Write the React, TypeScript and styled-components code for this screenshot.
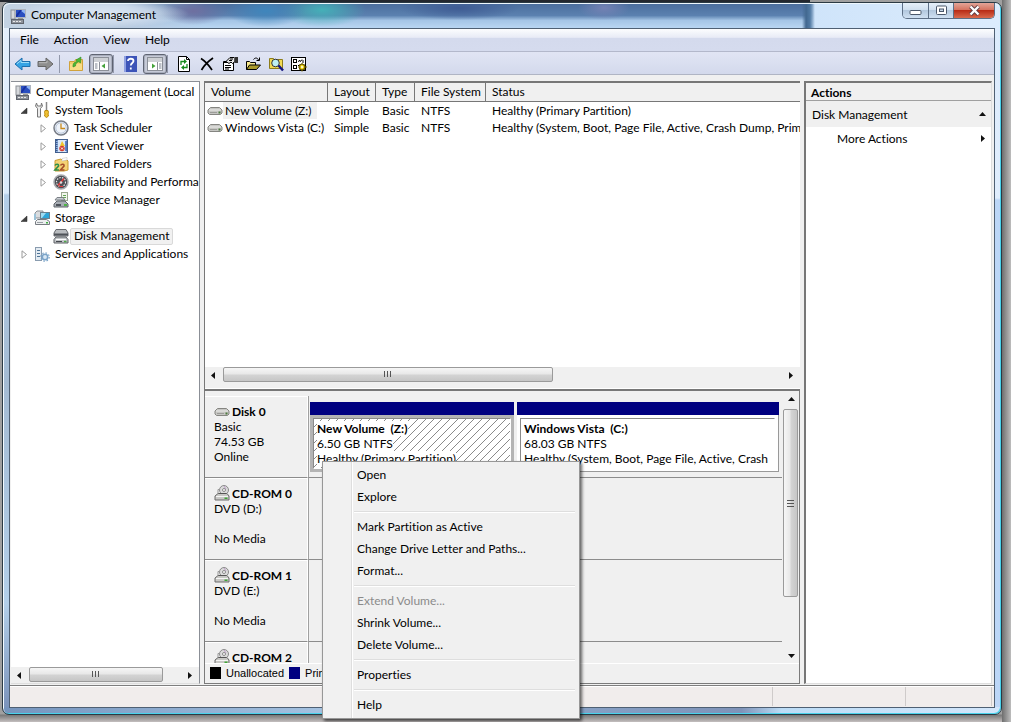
import React from "react";
import styled, { createGlobalStyle, css } from "styled-components";

const GlobalStyle = createGlobalStyle`
  *, *::before, *::after { box-sizing: border-box; }
  body {
    margin: 0;
    background: #a3a3a3;
    font: 12px/15px Lato, "Open Sans", sans-serif;
    font-variant-ligatures: none;
    color: #000;
  }
  button { font: inherit; font-variant-ligatures: none; color: inherit; margin: 0; padding: 0; border: 0; background: none; }
  ul, h1, h2, p { margin: 0; padding: 0; font-size: inherit; list-style: none; }
`;

const Desktop = styled.div`
  display: flex;
  min-height: 100vh;
  padding: 2px 9px 7px 2px;
  background:
    linear-gradient(#23272e, #23272e) 0 0 / 810px 2px no-repeat,
    linear-gradient(to right, transparent calc(100% - 9px), #6e6e6e calc(100% - 9px), #bdbdbd),
    linear-gradient(to top, #c4bfbf, #777 7px, #a0a0a0 8px);
`;

const Window = styled.div`
  position: relative;
  flex: 1;
  min-width: 0;
  display: flex;
  flex-direction: column;
  padding: 0 6px 6px;
  border: 1px solid #2b3a44;
  border-radius: 7px;
  box-shadow: inset 1px 1px 0 #f4fbff, inset -1px -1px 0 #48d3ec;
  background:
    linear-gradient(to right, #7594bd, #a9c6e4 35%, #8aa6ca 50%, #7f93b8 74%, #bcdcf6 78%, #d3e6fb) 0 100% / 100% 7px no-repeat,
    linear-gradient(#e5f0fb 0, #d9eafa 190px, #b4cfe9 192px, #a4bbd3 380px, #b3cfe9 600px, #7890b8) 0 0 / 8px 100% no-repeat,
    linear-gradient(#dcebfc 0, #e0edfd 195px, #bcd6f7 197px, #bcd6f7);
`;

const TitleBar = styled.header`
  display: flex;
  align-items: center;
  height: 25px;
  margin: 0 -5px;
  padding-left: 6px;
  border-radius: 6px 6px 0 0;
  box-shadow: inset 0 1px 0 #eef7fd;
  background:
    radial-gradient(ellipse 90px 14px at 95px 11px, #dfe9f4f0, #d5e1f0b0 60%, transparent),
    radial-gradient(ellipse 34px 14px at 190px 8px, #6e6fa0, transparent),
    radial-gradient(ellipse 40px 16px at 262px 8px, #3f86bc, transparent),
    radial-gradient(ellipse 44px 17px at 318px 7px, #45b0b8, transparent),
    radial-gradient(ellipse 60px 12px at 455px 5px, #3f5c94, transparent),
    radial-gradient(ellipse 26px 12px at 600px 5px, #7482b4, transparent),
    linear-gradient(to right, transparent 798px, #41678f 802px, #527ba4 806px, transparent 811px),
    linear-gradient(to right, #c3d3e3 0, #b9cbe0 120px, transparent 200px, transparent 800px, #cfe4fa 810px, #dcecfd),
    linear-gradient(#4a6c9c, #5b81b0 50%, #a5c5e6 70%, #b9d6f2);
`;

const Title = styled.h1`
  flex: 1;
  margin-left: 5px;
  padding-bottom: 2px;
  font-weight: 400;
`;

const CaptionButtons = styled.div`
  display: flex;
  align-self: flex-start;
  height: 16px;
  margin-right: 5px;
  border: solid #5d6f86;
  border-width: 0 1px 1px;
  border-radius: 0 0 5px 5px;
  overflow: hidden;
`;

const CaptionButton = styled.button<{ $close?: boolean }>`
  display: grid;
  place-items: center;
  width: ${(p) => (p.$close ? 41 : 25)}px;
  background: ${(p) =>
    p.$close
      ? "linear-gradient(#e3a598, #d4705c 48%, #b92d17 50%, #d9694c)"
      : "linear-gradient(#e6f0fa, #cfdfef 48%, #b3c8de 50%, #cfe0f2)"};
  & + & { border-left: 1px solid #5d6f86; }
`;

const Client = styled.div`
  flex: 1;
  display: flex;
  flex-direction: column;
  border: 1px solid #4f6073;
  background: #f0f0f0;
`;

const MenuBar = styled.nav`
  display: flex;
  align-items: center;
  height: 23px;
  padding-left: 4px;
  background: linear-gradient(#fcfdfe, #e8ebf6 38%, #d4daed 42%, #d5dbee);
  border-bottom: 1px solid #b3b8cb;
`;

const MenuButton = styled.button`
  height: 20px;
  padding: 0 6px 2px;
  & + & { margin-left: 3px; }
`;

const ToolBar = styled.div`
  display: flex;
  align-items: flex-end;
  height: 23px;
  padding-left: 1px;
  background: linear-gradient(#e1e5f4, #d3d9ec);
  border-bottom: 1px solid #b0b5c4;
`;

const ToolButton = styled.button<{ $pressed?: boolean }>`
  display: grid;
  place-items: center;
  width: 23px;
  height: 20px;
  ${(p) =>
    p.$pressed &&
    css`
      width: 24px;
      margin: 0 -2px 0 2px;
      border: 1px solid #5f6472;
      border-radius: 3px;
      background: #c6cad7;
      box-shadow: inset 0 0 0 1px #a9aebd;
    `}
`;

const ToolDivider = styled.span`
  width: 1px;
  height: 18px;
  margin: 0 4px 1px 2px;
  background: #9298ab;
`;

const Main = styled.main`
  flex: 1;
  display: grid;
  grid-template-columns: 189px minmax(0, 1fr) 188px;
  gap: 4px;
  padding: 6px 2px 1px 1px;
`;

const TreePane = styled.aside`
  display: flex;
  flex-direction: column;
  min-width: 0;
  border-top: 1px solid #8b8f96;
  border-right: 1px solid #8b8f96;
  border-bottom: 1px solid #dedede;
  background: #fff;
  overflow: hidden;
`;

const Tree = styled.ul`
  flex: 1;
  padding: 1px 0 0 4px;
`;

const TreeRow = styled.li<{ $level: number }>`
  display: flex;
  align-items: center;
  height: 18px;
  padding-left: ${(p) => (p.$level ? p.$level * 19 - 16 : 0)}px;
  white-space: nowrap;
  svg { flex: none; }
`;

const Expander = styled.span`
  display: grid;
  place-items: center;
  flex: none;
  width: 12px;
  margin-right: 4px;
`;

const TreeLabel = styled.span<{ $selected?: boolean }>`
  margin-left: 1px;
  padding: 0 3px 2px;
  line-height: 13px;
  border: 1px solid ${(p) => (p.$selected ? "#d9d9d9" : "transparent")};
  border-radius: 2px;
  background: ${(p) => (p.$selected ? "#f1f1f1" : "none")};
`;

const Scroll = styled.div<{ $vertical?: boolean }>`
  display: flex;
  flex: none;
  background: #f0f0f0;
  ${(p) =>
    p.$vertical
      ? css`
          flex-direction: column;
          width: 16px;
        `
      : css`
          height: 16px;
          padding-right: 2px;
        `}
`;

const ScrollArrow = styled.button`
  display: grid;
  place-items: center;
  flex: none;
  width: 16px;
  height: 16px;
`;

const Track = styled.div<{ $vertical?: boolean }>`
  display: flex;
  flex: 1;
  flex-direction: ${(p) => (p.$vertical ? "column" : "row")};
  padding: ${(p) => (p.$vertical ? "2px 1px 0 0" : "0 0 1px 2px")};
`;

const Thumb = styled.div<{ $vertical?: boolean; $size: number }>`
  display: grid;
  place-items: center;
  flex: 0 0 ${(p) => p.$size}%;
  border: 1px solid #9a9a9a;
  border-radius: 2px;
  background: linear-gradient(
    ${(p) => (p.$vertical ? "to right" : "to bottom")},
    #f6f6f6,
    #e7e7e7 48%,
    #d4d4d4 52%,
    #c6c6c6
  );
`;

const Center = styled.section`
  display: flex;
  flex-direction: column;
  min-width: 0;
`;

const VolumePane = styled.div`
  flex: 1;
  display: flex;
  flex-direction: column;
  border-top: 2px solid #777;
  border-left: 1px solid #777;
  border-bottom: 2px solid #777;
  background: #fff;
  overflow: hidden;
`;

const VolumeArea = styled.div`
  flex: 1;
  overflow: hidden;
`;

const VolumeTable = styled.table`
  width: 100%;
  table-layout: fixed;
  border-collapse: separate;
  border-spacing: 0;
  white-space: nowrap;
  th, td { padding: 0 0 0 6px; text-align: left; font-weight: 400; overflow: hidden; }
  th {
    height: 19px;
    padding-bottom: 1px;
    background: #f0f0f0;
    border-right: 1px solid #777;
    border-bottom: 1px solid #777;
  }
  th:last-child { border-right: 0; }
  td { height: 17px; line-height: 17px; }
  td:first-child { padding-left: 2px; }
`;

const Col = styled.col<{ $w?: number }>`
  width: ${(p) => (p.$w ? `${p.$w}px` : "auto")};
`;

const VolumeName = styled.span<{ $selected?: boolean }>`
  display: flex;
  align-items: center;
  gap: 2px;
  width: max-content;
  padding-right: 5px;
  background: ${(p) => (p.$selected ? "linear-gradient(to right, #fff 16px, #f0f0f0 16px)" : "none")};
`;

const Splitter = styled.div`
  height: 6px;
  background: #f0f0f0;
  border-bottom: 1px solid #fff;
`;

const DiskPane = styled.div`
  position: relative;
  flex: none;
  display: flex;
  flex-direction: column;
  height: 293px;
  border: solid #7b7b7b;
  border-width: 0 1px 1px;
`;

const DiskArea = styled.div`
  flex: 1;
  display: flex;
  min-height: 0;
`;

const DiskList = styled.div`
  flex: 1;
  min-width: 0;
  padding-top: 5px;
  overflow: hidden;
`;

const DiskRow = styled.section`
  display: grid;
  grid-template-columns: 103px minmax(0, 1fr);
  height: 82px;
  padding-right: 1px;
`;

const DiskLabel = styled.div`
  padding: 7px 0 0 9px;
  border-top: 1px solid #fff;
  border-right: 1px solid #fff;
  border-bottom: 1px solid #8c8c8c;
`;

const DiskName = styled.h2`
  display: flex;
  align-items: center;
  height: 15px;
  gap: 2px;
  font-weight: 700;
`;

const DiskLine = styled.p`
  min-height: 15px;
`;

const DiskGraph = styled.div`
  display: flex;
  gap: 3px;
  padding: 6px 3px 5px 1px;
  border-left: 1px solid #a0a0a0;
  border-bottom: 1px solid #8c8c8c;
`;

const Partition = styled.div<{ $size: number }>`
  flex: ${(p) => p.$size} 1 0;
  min-width: 0;
  display: flex;
  flex-direction: column;
  border-top: 13px solid #000080;
`;

const PartitionFrame = styled.div<{ $selected?: boolean }>`
  flex: 1;
  display: flex;
  padding: 3px;
  background: ${(p) => (p.$selected ? "#b4b4b4" : "#fff")};
  border-right: ${(p) => (p.$selected ? 0 : 1)}px solid #999;
  border-bottom: ${(p) => (p.$selected ? 0 : 1)}px solid #999;
`;

const PartitionBody = styled.div<{ $selected?: boolean }>`
  flex: 1;
  min-width: 0;
  padding: 2px 3px 0;
  border: 1px solid #8a8a8a;
  border-right-color: #fff;
  border-bottom-color: #fff;
  background: ${(p) =>
    p.$selected
      ? "#fff linear-gradient(135deg, transparent 45%, #8a8a8a 45% 55%, transparent 55%) 0 0 / 8px 8px"
      : "#fff"};
  overflow: hidden;
`;

const PartitionLine = styled.p<{ $bold?: boolean }>`
  width: max-content;
  background: #fff;
  font-weight: ${(p) => (p.$bold ? 700 : 400)};
  white-space: pre;
`;

const Legend = styled.div`
  display: flex;
  align-items: center;
  height: 20px;
  padding: 0 0 2px 5px;
  border-top: 1px solid #fff;
  background: #f0f0f0;
  font: 11px/14px "Liberation Sans", Arial, sans-serif;
`;

const LegendItem = styled.span<{ $color: string }>`
  display: flex;
  align-items: center;
  gap: 5px;
  margin-right: 5px;
  &::before {
    content: "";
    width: 11px;
    height: 12px;
    background: ${(p) => p.$color};
  }
`;

const ContextMenu = styled.div`
  position: absolute;
  left: 117px;
  top: 70px;
  width: 258px;
  padding: 2px;
  border: 1px solid #979797;
  background: linear-gradient(to right, #f1f1f1 28px, #dedede 28px, #dedede 29px, #fff 29px, #fff 30px, #f0f0f0 30px);
  box-shadow: 2px 2px 3px #0009;
`;

const ContextItem = styled.button`
  display: block;
  width: 100%;
  height: 22px;
  padding: 0 0 1px 32px;
  text-align: left;
  &:disabled { color: #8b8b8b; }
`;

const ContextDivider = styled.hr`
  height: 2px;
  margin: 3px 2px 3px 29px;
  border: 0;
  border-top: 1px solid #dedede;
  border-bottom: 1px solid #fff;
`;

const ActionsPane = styled.aside`
  border-top: 2px solid #777;
  border-left: 2px solid #777;
  border-bottom: 1px solid #dedede;
  border-right: 1px solid #dedede;
  background: #fff;
`;

const ActionsHead = styled.h2`
  height: 18px;
  padding: 2px 5px 0;
  background: #f0f0f0;
  border-bottom: 1px solid #a0a0a0;
  font-weight: 700;
`;

const ActionItem = styled.button<{ $group?: boolean }>`
  display: flex;
  align-items: center;
  justify-content: space-between;
  width: 100%;
  height: ${(p) => (p.$group ? 26 : 22)}px;
  padding: 0 4px 0 ${(p) => (p.$group ? 6 : 31)}px;
  background: ${(p) => (p.$group ? "#f0f0f0" : "#fff")};
`;

const StatusBar = styled.footer`
  display: grid;
  grid-template-columns: 1fr 133px 86px;
  height: 22px;
  padding: 1px 2px 1px 0;
  border-top: 1px solid #7e7e7e;
  background: #f1edec;
  box-shadow: inset 0 1px 0 #fff;
`;

const StatusCell = styled.span`
  border-right: 1px solid #cfcbca;
`;

type Dir = "left" | "right" | "up" | "down";
const arrowPaths: Record<Dir, string> = {
  left: "M6 1v7L2 4.5z",
  right: "M3 1v7l4-3.500z",
  up: "M1 6h7L4.500 2z",
  down: "M1 3h7L4.500 7z",
};
const Arrow = ({ dir }: { dir: Dir }) => (
  <svg width="9" height="9" viewBox="0 0 9 9" aria-hidden="true">
    <path d={arrowPaths[dir]} fill="#111" />
  </svg>
);

const Grip = ({ vertical }: { vertical?: boolean }) => (
  <svg width="9" height="9" viewBox="0 0 9 9" aria-hidden="true">
    <path
      d={vertical ? "M1 1.500h7M1 4.500h7M1 7.500h7" : "M1.500 1v6M4.500 1v6M7.500 1v6"}
      stroke="#555"
      fill="none"
    />
  </svg>
);

function ScrollBar({ vertical, size, label }: { vertical?: boolean; size: number; label: string }) {
  return (
    <Scroll $vertical={vertical} role="scrollbar" aria-label={label}>
      <ScrollArrow aria-label="Scroll back">
        <Arrow dir={vertical ? "up" : "left"} />
      </ScrollArrow>
      <Track $vertical={vertical}>
        <Thumb $vertical={vertical} $size={size}>
          <Grip vertical={vertical} />
        </Thumb>
      </Track>
      <ScrollArrow aria-label="Scroll forward">
        <Arrow dir={vertical ? "down" : "right"} />
      </ScrollArrow>
    </Scroll>
  );
}

const Icon = ({ children, w = 16, h = 16 }: { children: React.ReactNode; w?: number; h?: number }) => (
  <svg width={w} height={h} viewBox={`0 0 ${w} ${h}`} fill="none" aria-hidden="true">
    {children}
  </svg>
);

const ComputerIcon = () => (
  <Icon>
    <rect x="1" y="2" width="4" height="9" fill="#d5d8dc" stroke="#8c9096" />
    <rect x="5.500" y="1.500" width="10" height="8" fill="#2a4fc0" stroke="#aeb4bd" />
    <path d="M10 2h5v4z" fill="#8fb4f4" />
    <path d="M6 7l4-5h2L7 9H6z" fill="#1730a0" />
    <path d="M8 10h5v1.500H8z" fill="#999" />
    <rect x="1.500" y="11.500" width="12" height="4" fill="#8f949c" stroke="#5f646c" />
    <path d="M3 13.500h9" stroke="#e8e8e8" strokeDasharray="2 1" />
  </Icon>
);
const ToolsIcon = () => (
  <Icon>
    <path d="M2.500 1L1.500 4l2 2.500V15h3V6.500l2-2.500-1-3-.5 3H3.500z" fill="#ededed" stroke="#777" />
    <path d="M12.500 0v8" stroke="#888" strokeWidth="1.500" />
    <path d="M11 8.500h3l.5 2-.5 1.500.5 2-2 1.500-2-1.500.5-2-.5-1.500z" fill="#f1c232" stroke="#b98a10" />
  </Icon>
);
const ClockIcon = () => (
  <Icon>
    <circle cx="8" cy="8" r="7" fill="#eef3fa" stroke="#777c86" strokeWidth="1.500" />
    <circle cx="8" cy="8" r="5.200" stroke="#b9c6d9" />
    <path d="M8 3.500V8.500h4" stroke="#c98a1c" strokeWidth="1.300" />
  </Icon>
);
const EventIcon = () => (
  <Icon>
    <rect x="2.500" y="1.500" width="12" height="13" fill="#8fb0e0" stroke="#44618f" />
    <rect x="5" y="2" width="8" height="12" fill="#dbe8f8" />
    <path d="M3.500 2v13" stroke="#3d5a8b" strokeDasharray="1 1" strokeWidth="2" />
    <path d="M9 3l3 5H7z" fill="#f0c52d" />
    <circle cx="9" cy="10.500" r="2.700" fill="#d23b2d" />
    <path d="M8 9.500l2 2m0-2l-2 2" stroke="#fff" />
    <path d="M13 3v10" stroke="#3a64b8" strokeWidth="1.500" />
  </Icon>
);
const SharedIcon = () => (
  <Icon>
    <path d="M2 4.500L8 3l1 1h5l1 1V14l-4 1H2z" fill="#f4d273" stroke="#c99a2e" />
    <path d="M9 2.500l5-1v2.500L9 5z" fill="#fff" stroke="#bbb" strokeWidth=".5" />
    <path d="M2 9.500c1-2 4-1.500 3.500.5L2 14h4" stroke="#2f8f48" strokeWidth="1.600" />
    <path d="M7.500 9.500c1-2 4-1.500 3.500.5l-3.500 4h4" stroke="#a5502a" strokeWidth="1.600" />
  </Icon>
);
const GaugeIcon = () => (
  <Icon>
    <circle cx="8" cy="8" r="7" fill="#4c4f55" stroke="#a7a9ad" strokeWidth="1.500" />
    <circle cx="8" cy="8" r="4.500" stroke="#e8e8e8" strokeWidth="1.200" strokeDasharray="1.500 1.200" />
    <path d="M5 11.500L11 4.500" stroke="#e8393a" strokeWidth="1.400" />
    <circle cx="8" cy="8.500" r="1.300" fill="#ddd" />
    <path d="M6 12.500h4" stroke="#e8393a" />
  </Icon>
);
const DeviceIcon = () => (
  <Icon>
    <rect x="8.500" y=".5" width="6" height="8" fill="#f3f7ee" stroke="#9aa88f" />
    <path d="M10 3.500h3M10 5.500h3" stroke="#62a552" />
    <path d="M2 8l2-2.500h6L12 8z" fill="#c9cdd2" stroke="#7b8087" />
    <path d="M1 12l3-3h8l3 3v3H1z" fill="#a8adb4" stroke="#5f646b" />
    <rect x="3" y="12" width="5" height="2" fill="#4d525a" />
    <rect x="11" y="12" width="3" height="2" fill="#4db544" />
  </Icon>
);
const StorageIcon = () => (
  <Icon>
    <path d="M1 3l2-2h6v7H1z" fill="#d9dcdf" stroke="#8b9096" />
    <rect x="6.500" y="2.500" width="9" height="6" fill="#2da5d8" stroke="#69808e" />
    <path d="M7 3h5L8 8H7z" fill="#9fdcf2" />
    <path d="M1.500 11.500l2-2h9l3 2v3h-14z" fill="#eceeef" stroke="#777c82" />
    <path d="M3 12.500h6" stroke="#9a9fa5" />
    <rect x="12" y="12" width="2" height="1.500" fill="#3fae44" />
    <path d="M1 4v6" stroke="#9bc2d8" strokeWidth="2" />
  </Icon>
);
const DiskMgmtIcon = () => (
  <Icon>
    <path d="M1 5l2-3.500h10L15 5v3H1z" fill="#b9bcbf" stroke="#66696e" />
    <path d="M1 5.500h14v2H1z" fill="#4f5358" />
    <path d="M3 9h10l2 2.500V15H1v-3.500z" fill="#c3c6c9" stroke="#5c6065" />
    <path d="M3 11.500h10" stroke="#fff" />
    <path d="M3 13.500h6" stroke="#44484d" />
    <rect x="11" y="12.800" width="2.500" height="1.500" fill="#50a84b" />
  </Icon>
);
const ServicesIcon = () => (
  <Icon>
    <rect x="1.500" y="1.500" width="6" height="13" fill="#e3ebf2" stroke="#8a9caf" />
    <path d="M3 4.500h3M3 7.500h3M3 10.500h3" stroke="#4e7395" />
    <circle cx="11" cy="11" r="2.700" stroke="#7ba4c9" strokeWidth="1.600" fill="#d9e8f5" />
    <circle cx="11" cy="11" r="4.200" stroke="#7ba4c9" strokeDasharray="1.500 1.800" strokeWidth="1.200" />
  </Icon>
);
const DriveIcon = () => (
  <Icon h={10}>
    <path d="M1 4l2.500-2.500h9L15 4v3l-1.500 1.500h-11L1 7z" fill="#c6c6c3" stroke="#858581" />
    <path d="M2 4h12" stroke="#ececea" />
    <path d="M3 6.500h7" stroke="#9c9c98" />
    <rect x="11.500" y="5.500" width="2" height="2" fill="#4b7a3d" />
  </Icon>
);
const CdIcon = () => (
  <Icon h={18}>
    <circle cx="10" cy="5" r="4.500" fill="#dcdcdc" stroke="#8a8a8a" />
    <circle cx="10" cy="5" r="1.500" fill="#fff" stroke="#8a8a8a" />
    <path d="M10 1l2 3" stroke="#bfa0c9" />
    <path d="M4 8v-3.500h2" stroke="#999" />
    <path d="M1 11l3-2.500h9l2 2.500v4H1z" fill="#c8c8c5" stroke="#6c6c6c" />
    <path d="M2 11.500h12" stroke="#f5f5f5" />
    <path d="M5 8.500h7" stroke="#555" />
    <rect x="10.500" y="12.500" width="3" height="1.500" fill="#3fa637" />
  </Icon>
);

const BackIcon = () => (
  <Icon w={17}>
    <path d="M1 8l7-6v3.500h8v5H8V14z" fill="#36a3e4" stroke="#1d6fae" />
    <path d="M3 7.700L7 4.500v2h8" stroke="#9bdcf8" />
  </Icon>
);
const ForwardIcon = () => (
  <Icon w={17}>
    <path d="M16 8L9 2v3.500H1v5h8V14z" fill="#8e8e8e" stroke="#666" />
    <path d="M2 6.700h8v-2" stroke="#b9b9b9" />
  </Icon>
);
const UpFolderIcon = () => (
  <Icon>
    <path d="M1.500 5.500h5l1-2h7v11h-13z" fill="#f3cf6a" stroke="#d0a23c" />
    <path d="M2 8h12v6H2z" fill="#f9dc86" />
    <path d="M5 11c-.5-3 1-5 4-5.500L8 4l5-3-.5 6-1.700-1.200C8.500 6.500 7.500 8 7.500 10z" fill="#4cb935" stroke="#2f8c22" strokeWidth=".6" />
  </Icon>
);
const PaneIcon = ({ flip }: { flip?: boolean }) => (
  <Icon>
    <rect x=".5" y="1.500" width="15" height="13" fill="#fff" stroke="#8b8f98" />
    <path d="M1 3h14M1 5h14" stroke="#9da2ab" />
    <path d={flip ? "M10.500 6v8" : "M6.500 6v8"} stroke="#8b8f98" />
    <path d={flip ? "M12 8h2.500M12 10h2.500M12 12h2.500" : "M2 8h2.500M2 10h2.500M2 12h2.500"} stroke="#7b8290" />
    <path d={flip ? "M5 7.500v5L8.500 10z" : "M12 7.500v5L8.500 10z"} fill="#45a23a" />
  </Icon>
);
const HelpIcon = () => (
  <Icon>
    <rect x="2" y="0" width="13" height="16" fill="#3d54b8" />
    <path d="M2 0h2v16H2z" fill="#8fa0e0" />
    <path d="M6 5c0-3 5.500-3 5.500 0 0 2-2.700 2-2.700 4.500M8.800 11.500v2" stroke="#fff" strokeWidth="1.800" />
  </Icon>
);
const RefreshIcon = () => (
  <Icon>
    <path d="M2.500.5h8l3 3v12h-11z" fill="#fff" stroke="#000" />
    <path d="M10.500.5v3h3" stroke="#000" />
    <path d="M5 9V5.500h4" stroke="#168a1d" strokeWidth="1.300" />
    <path d="M8 3l3 2.500L8 8z" fill="#168a1d" />
    <path d="M11 8v3.500H7" stroke="#168a1d" strokeWidth="1.300" />
    <path d="M8 9l-3 2.500L8 14z" fill="#168a1d" />
  </Icon>
);
const DeleteIcon = () => (
  <Icon>
    <path d="M2 2.500c4 2.500 8 7 11 11.500M14 2C9 5.500 5 9.500 2.500 14" stroke="#000" strokeWidth="1.700" />
  </Icon>
);
const PropertiesIcon = () => (
  <Icon>
    <path d="M1.500 5.500h10v9h-10z" fill="#fff" stroke="#000" />
    <path d="M1 6.500h9M3 9.500h6M3 11.500h6M3 13h4" stroke="#000" />
    <path d="M4 5.500l4-4h4l1 1v3l-2.500 2L9 6l-2 1.500z" fill="#e6e6e6" stroke="#000" />
    <path d="M7 4.500h3M8 3h3" stroke="#000" />
    <path d="M12.500 1H16v6h-3.500z" fill="#333" />
  </Icon>
);
const OpenIcon = () => (
  <Icon>
    <path d="M1.500 13.500v-8h3l1 1h5v3" fill="#f6e78c" stroke="#000" />
    <path d="M1.500 13.500l3-4.500h11l-4 4.500z" fill="#a99a2c" stroke="#000" />
    <path d="M8.500 3.500c1.500-2 4-2 5 .5M14.500 1.500v3h-3" stroke="#000" />
  </Icon>
);
const SearchIcon = () => (
  <Icon>
    <path d="M1.500 12.500v-10h4l1 1h8v9z" fill="#f2da52" stroke="#8d7c1a" />
    <circle cx="7.500" cy="7" r="3.800" fill="#bdeff2" stroke="#333" />
    <path d="M10.500 9.500l4.500 5" stroke="#14147e" strokeWidth="2.500" />
  </Icon>
);
const SettingsIcon = () => (
  <Icon>
    <rect x=".5" y="1.500" width="14" height="13" fill="#fff" stroke="#000" />
    <rect x="2.500" y="3.500" width="3" height="3" stroke="#000" />
    <rect x="2.500" y="9.500" width="3" height="3" stroke="#000" />
    <path d="M7.500 6l1-2 1 1.500L11 3.500M12 4v3M7 9.500h3" stroke="#000" />
    <circle cx="11" cy="11" r="3" fill="#f4d91c" stroke="#6d5d00" />
    <path d="M11 7v2M11 13v2.500M7.500 11h2M13 11h3M8.500 8.500l1 1M12.500 12.500l1.500 1.500M13.500 8.500l-1 1M8.500 13.500l1-1" stroke="#6d5d00" />
    <circle cx="11" cy="11" r="1" fill="#fff" />
  </Icon>
);

type Node = { label: string; level: number; icon: React.ReactNode; state?: "open" | "closed"; selected?: boolean };
const treeNodes: Node[] = [
  { label: "Computer Management (Local", level: 0, icon: <ComputerIcon /> },
  { label: "System Tools", level: 1, icon: <ToolsIcon />, state: "open" },
  { label: "Task Scheduler", level: 2, icon: <ClockIcon />, state: "closed" },
  { label: "Event Viewer", level: 2, icon: <EventIcon />, state: "closed" },
  { label: "Shared Folders", level: 2, icon: <SharedIcon />, state: "closed" },
  { label: "Reliability and Performance", level: 2, icon: <GaugeIcon />, state: "closed" },
  { label: "Device Manager", level: 2, icon: <DeviceIcon /> },
  { label: "Storage", level: 1, icon: <StorageIcon />, state: "open" },
  { label: "Disk Management", level: 2, icon: <DiskMgmtIcon />, selected: true },
  { label: "Services and Applications", level: 1, icon: <ServicesIcon />, state: "closed" },
];

const volumes = [
  { name: "New Volume (Z:)", status: "Healthy (Primary Partition)", selected: true },
  { name: "Windows Vista (C:)", status: "Healthy (System, Boot, Page File, Active, Crash Dump, Primary Partition)" },
];

const discs = [
  { name: "CD-ROM 0", lines: ["DVD (D:)", "", "No Media"] },
  { name: "CD-ROM 1", lines: ["DVD (E:)", "", "No Media"] },
  { name: "CD-ROM 2", lines: [] },
];

const menuGroups = [
  ["Open", "Explore"],
  ["Mark Partition as Active", "Change Drive Letter and Paths...", "Format..."],
  ["Extend Volume...", "Shrink Volume...", "Delete Volume..."],
  ["Properties"],
  ["Help"],
];

const ExpandMark = ({ state }: { state?: "open" | "closed" }) => (
  <svg width="8" height="9" viewBox="0 0 8 9" aria-hidden="true">
    {state === "open" && <path d="M7 2v5.500H1z" fill="#404040" stroke="#222" strokeWidth=".5" />}
    {state === "closed" && <path d="M2 .8v7.400L6.500 4.500z" fill="#fff" stroke="#9a9a9a" />}
  </svg>
);

export default function App() {
  return (
    <>
      <GlobalStyle />
      <Desktop>
        <Window>
          <TitleBar>
            <ComputerIcon />
            <Title>Computer Management</Title>
            <CaptionButtons>
              <CaptionButton aria-label="Minimize">
                <Icon w={13} h={11}>
                  <rect x="1" y="5.500" width="11" height="4" rx="1" fill="#fff" stroke="#4b586b" />
                </Icon>
              </CaptionButton>
              <CaptionButton aria-label="Maximize">
                <Icon w={13} h={11}>
                  <rect x="1.500" y="1" width="10" height="8.500" rx="1" fill="#fff" stroke="#4b586b" />
                  <rect x="4.500" y="4" width="4" height="2.500" fill="#c3d3e4" stroke="#4b586b" />
                </Icon>
              </CaptionButton>
              <CaptionButton $close aria-label="Close">
                <Icon w={13} h={11}>
                  <path d="M2.500 1.500l8 8M10.500 1.500l-8 8" stroke="#5b3b44" strokeWidth="4" />
                  <path d="M2.500 1.500l8 8M10.500 1.500l-8 8" stroke="#fff" strokeWidth="2.400" />
                </Icon>
              </CaptionButton>
            </CaptionButtons>
          </TitleBar>
          <Client>
            <MenuBar>
              {["File", "Action", "View", "Help"].map((m) => (
                <MenuButton key={m}>{m}</MenuButton>
              ))}
            </MenuBar>
            <ToolBar role="toolbar">
              <ToolButton aria-label="Back"><BackIcon /></ToolButton>
              <ToolButton aria-label="Forward"><ForwardIcon /></ToolButton>
              <ToolDivider />
              <ToolButton aria-label="Up one level"><UpFolderIcon /></ToolButton>
              <ToolButton aria-label="Console tree" $pressed><PaneIcon /></ToolButton>
              <ToolDivider />
              <ToolButton aria-label="Help topics"><HelpIcon /></ToolButton>
              <ToolButton aria-label="Action pane" $pressed><PaneIcon flip /></ToolButton>
              <ToolDivider />
              <ToolButton aria-label="Refresh"><RefreshIcon /></ToolButton>
              <ToolButton aria-label="Delete"><DeleteIcon /></ToolButton>
              <ToolButton aria-label="Properties"><PropertiesIcon /></ToolButton>
              <ToolButton aria-label="Open"><OpenIcon /></ToolButton>
              <ToolButton aria-label="Search"><SearchIcon /></ToolButton>
              <ToolButton aria-label="Settings"><SettingsIcon /></ToolButton>
            </ToolBar>
            <Main>
              <TreePane>
                <Tree role="tree">
                  {treeNodes.map((n) => (
                    <TreeRow key={n.label} role="treeitem" $level={n.level}>
                      {n.level > 0 && (
                        <Expander>
                          <ExpandMark state={n.state} />
                        </Expander>
                      )}
                      {n.icon}
                      <TreeLabel $selected={n.selected}>{n.label}</TreeLabel>
                    </TreeRow>
                  ))}
                </Tree>
                <ScrollBar size={88} label="Scroll the console tree" />
              </TreePane>

              <Center>
                <VolumePane>
                  <VolumeArea>
                    <VolumeTable>
                      <colgroup>
                        <Col $w={123} />
                        <Col $w={48} />
                        <Col $w={39} />
                        <Col $w={71} />
                        <Col />
                      </colgroup>
                      <thead>
                        <tr>
                          {["Volume", "Layout", "Type", "File System", "Status"].map((h) => (
                            <th key={h} scope="col">{h}</th>
                          ))}
                        </tr>
                      </thead>
                      <tbody>
                        {volumes.map((v) => (
                          <tr key={v.name}>
                            <td>
                              <VolumeName $selected={v.selected}>
                                <DriveIcon />
                                {v.name}
                              </VolumeName>
                            </td>
                            <td>Simple</td>
                            <td>Basic</td>
                            <td>NTFS</td>
                            <td>{v.status}</td>
                          </tr>
                        ))}
                      </tbody>
                    </VolumeTable>
                  </VolumeArea>
                  <ScrollBar size={59} label="Scroll the volume list" />
                  <Splitter />
                </VolumePane>

                <DiskPane>
                  <DiskArea>
                    <DiskList>
                      <DiskRow>
                        <DiskLabel>
                          <DiskName><DriveIcon />Disk 0</DiskName>
                          <DiskLine>Basic</DiskLine>
                          <DiskLine>74.53 GB</DiskLine>
                          <DiskLine>Online</DiskLine>
                        </DiskLabel>
                        <DiskGraph>
                          <Partition $size={204}>
                            <PartitionFrame $selected>
                              <PartitionBody $selected>
                                <PartitionLine $bold>{"New Volume  (Z:)"}</PartitionLine>
                                <PartitionLine>6.50 GB NTFS</PartitionLine>
                                <PartitionLine>Healthy (Primary Partition)</PartitionLine>
                              </PartitionBody>
                            </PartitionFrame>
                          </Partition>
                          <Partition $size={262}>
                            <PartitionFrame>
                              <PartitionBody>
                                <PartitionLine $bold>{"Windows Vista  (C:)"}</PartitionLine>
                                <PartitionLine>68.03 GB NTFS</PartitionLine>
                                <PartitionLine>Healthy (System, Boot, Page File, Active, Crash</PartitionLine>
                              </PartitionBody>
                            </PartitionFrame>
                          </Partition>
                        </DiskGraph>
                      </DiskRow>
                      {discs.map((d) => (
                        <DiskRow key={d.name}>
                          <DiskLabel>
                            <DiskName><CdIcon />{d.name}</DiskName>
                            {d.lines.map((l, i) => (
                              <DiskLine key={i}>{l}</DiskLine>
                            ))}
                          </DiskLabel>
                          <DiskGraph />
                        </DiskRow>
                      ))}
                    </DiskList>
                    <ScrollBar vertical size={79} label="Scroll the disk list" />
                  </DiskArea>
                  <Legend>
                    <LegendItem $color="#000">Unallocated</LegendItem>
                    <LegendItem $color="#000080">Primary partition</LegendItem>
                  </Legend>
                  <ContextMenu role="menu">
                    {menuGroups.map((group, g) => (
                      <React.Fragment key={g}>
                        {g > 0 && <ContextDivider />}
                        {group.map((item) => (
                          <ContextItem key={item} role="menuitem" disabled={item === "Extend Volume..."}>
                            {item}
                          </ContextItem>
                        ))}
                      </React.Fragment>
                    ))}
                  </ContextMenu>
                </DiskPane>
              </Center>

              <ActionsPane>
                <ActionsHead>Actions</ActionsHead>
                <ActionItem $group>
                  Disk Management
                  <Arrow dir="up" />
                </ActionItem>
                <ActionItem>
                  More Actions
                  <Arrow dir="right" />
                </ActionItem>
              </ActionsPane>
            </Main>
            <StatusBar>
              <StatusCell />
              <StatusCell />
              <StatusCell />
            </StatusBar>
          </Client>
        </Window>
      </Desktop>
    </>
  );
}
